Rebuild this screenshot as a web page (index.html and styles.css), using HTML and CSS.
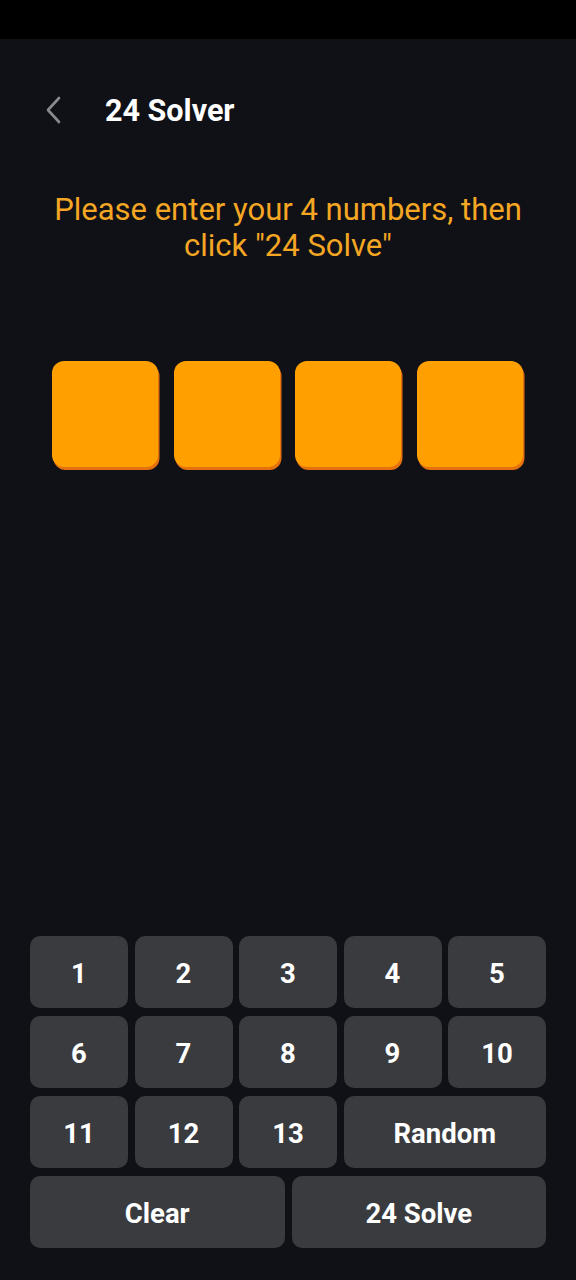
FILE: index.html
```html
<!DOCTYPE html>
<html>
<head>
<meta charset="utf-8">
<link rel="stylesheet" href="styles.css">
</head>
<body>
<div class="status"></div>
<div class="app">
  <header class="top">
    <svg class="back" width="20" height="30" viewBox="0 0 20 30"><path d="M15 3 L4 15 L15 27" fill="none" stroke="#8a8b8e" stroke-width="2.6" stroke-linecap="round" stroke-linejoin="round"/></svg>
    <h1 class="title">24 Solver</h1>
  </header>
  <p class="hint">Please enter your 4 numbers, then<br>click "24 Solve"</p>
  <div class="slots">
    <div class="slot"></div>
    <div class="slot"></div>
    <div class="slot"></div>
    <div class="slot"></div>
  </div>
  <div class="spacer"></div>
  <div class="pad">
    <div class="row5">
      <button class="key">1</button><button class="key">2</button><button class="key">3</button><button class="key">4</button><button class="key">5</button>
    </div>
    <div class="row5">
      <button class="key">6</button><button class="key">7</button><button class="key">8</button><button class="key">9</button><button class="key">10</button>
    </div>
    <div class="row5">
      <button class="key">11</button><button class="key">12</button><button class="key">13</button><button class="key span2">Random</button>
    </div>
    <div class="row2">
      <button class="key">Clear</button><button class="key">24 Solve</button>
    </div>
  </div>
</div>
</body>
</html>
```
FILE: styles.css
```css
* { box-sizing: border-box; }
html, body { margin: 0; padding: 0; }
body {
  width: 576px;
  height: 1280px;
  background: #0f1117;
  font-family: Roboto, "Noto Sans", sans-serif;
  overflow: hidden;
}
.status { height: 39px; background: #000; }
.app {
  height: 1241px;
  display: flex;
  flex-direction: column;
}
.top {
  display: flex;
  align-items: center;
  height: 60px;
  margin-top: 41px;
  padding-left: 44px;
}
.back { display: block; margin-right: 41px; }
.title {
  margin: 0;
  color: #fff;
  font-size: 30.5px;
  font-weight: 700;
}
.hint {
  margin: 52px 0 0;
  text-align: center;
  color: #f5a623;
  font-size: 31px;
  line-height: 36px;
}
.slots {
  display: flex;
  gap: 15.7px;
  margin: 97px 0 0 52px;
}
.slot {
  width: 106px;
  height: 106px;
  border-radius: 12px;
  background: #ffa000;
  box-shadow: 1.5px 3px 0 #e4700e;
}
.spacer { flex: 1; }
.pad {
  padding: 0 30px 32px;
  display: flex;
  flex-direction: column;
  gap: 8px;
}
.row5 {
  display: grid;
  grid-template-columns: repeat(5, 1fr);
  gap: 6.5px;
}
.row2 {
  display: grid;
  grid-template-columns: 1fr 1fr;
  gap: 7px;
}
.span2 { grid-column: span 2; }
.key {
  height: 72px;
  border: 0;
  border-radius: 10px;
  background: #3a3b3e;
  color: #fff;
  font-family: Roboto, "Noto Sans", sans-serif;
  font-size: 27.5px;
  font-weight: 700;
  padding: 2px 0 0;
}
```
